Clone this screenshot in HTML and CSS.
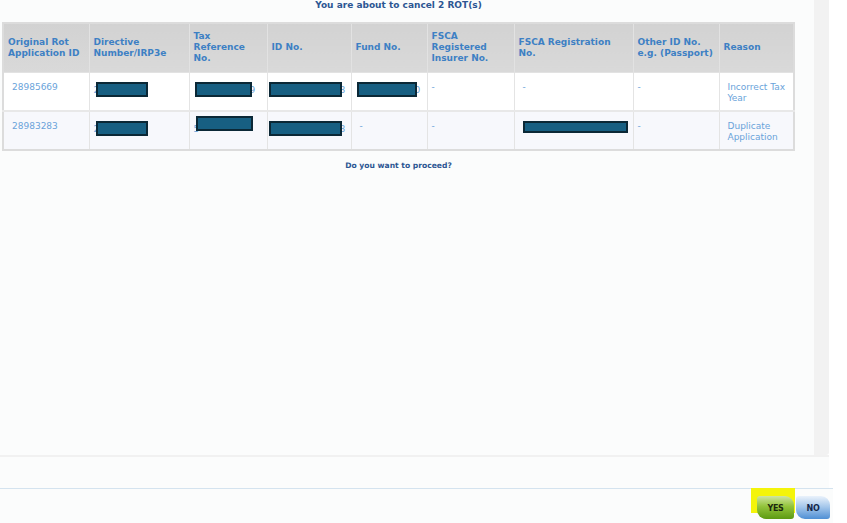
FILE: index.html
```html
<!DOCTYPE html>
<html lang="en">
<head>
  <meta charset="UTF-8">
  <meta name="viewport" content="width=device-width, initial-scale=1.0">
  <title>Cancel ROT</title>
  <link rel="stylesheet" href="styles.css">
</head>
<body>
  <div class="frame">
    <div class="panel">
      <div class="content">
        <h1 class="titulo">You are about to cancel 2 ROT(s)</h1>
        <table class="rot-table">
          <colgroup>
            <col style="width:86px"><col style="width:100px"><col style="width:78px">
            <col style="width:84px"><col style="width:76px"><col style="width:87px">
            <col style="width:119px"><col style="width:86px"><col style="width:75px">
          </colgroup>
          <thead>
            <tr>
              <th>Original Rot<br>Application ID</th>
              <th>Directive<br>Number/IRP3e</th>
              <th>Tax<br>Reference<br>No.</th>
              <th>ID No.</th>
              <th>Fund No.</th>
              <th>FSCA<br>Registered<br>Insurer No.</th>
              <th>FSCA Registration<br>No.</th>
              <th>Other ID No.<br>e.g. (Passport)</th>
              <th>Reason</th>
            </tr>
          </thead>
          <tbody>
            <tr>
              <td>28985669</td>
              <td class="tight"><span class="oculto">2<span class="tarja w51"></span></span></td>
              <td><span class="oculto"><span class="tarja w56"></span>9</span></td>
              <td class="tight"><span class="oculto"><span class="tarja w72"></span>8</span></td>
              <td><span class="oculto"><span class="tarja w59"></span>0</span></td>
              <td class="tight">-</td>
              <td>-</td>
              <td class="tight">-</td>
              <td>Incorrect Tax<br>Year</td>
            </tr>
            <tr>
              <td>28983283</td>
              <td class="tight"><span class="oculto">2<span class="tarja w51"></span></span></td>
              <td class="tight"><span class="oculto sobe">5<span class="tarja w56"></span></span></td>
              <td class="tight"><span class="oculto"><span class="tarja w72"></span>8</span></td>
              <td>-</td>
              <td class="tight">-</td>
              <td><span class="oculto"><span class="tarja w104 fina"></span></span></td>
              <td class="tight">-</td>
              <td>Duplicate<br>Application</td>
            </tr>
          </tbody>
        </table>
        <p class="pergunta">Do you want to proceed?</p>
      </div>
    </div>
    <div class="scroll"></div>
  </div>
  <div class="faixa"></div>
  <div class="acoes">
    <span class="marca"><button class="btn btn-sim">YES</button></span>
    <button class="btn btn-nao">NO</button>
  </div>
</body>
</html>
```

FILE: styles.css
```css
:root {
  --azul-titulo: #2c5693;
  --azul-cabecalho: #3d80c4;
  --azul-texto: #6aa3da;
  --fundo: #fbfcfc;
  --cinza-borda: #dcdcdc;
  --tarja: #175f82;
}
* { box-sizing: border-box; margin: 0; padding: 0; }
body {
  font-family: 'DejaVu Sans', Verdana, sans-serif;
  background: #fff;
  width: 847px;
  height: 523px;
  overflow: hidden;
}
.frame {
  display: flex;
  width: 829px;
  height: 455px;
}
.panel {
  width: 814px;
  background: var(--fundo);
}
.scroll {
  width: 15px;
  background: #f2f2f2;
  border-radius: 0 0 3px 0;
}
.content {
  width: 793px;
  margin-left: 2px;
}
.titulo {
  margin-top: 0;
  font-size: 9px;
  line-height: 11px;
  font-weight: bold;
  color: var(--azul-titulo);
  text-align: center;
}
.rot-table {
  margin-top: 11px;
  width: 793px;
  table-layout: fixed;
  border-collapse: collapse;
  border: 2px solid var(--cinza-borda);
  font-size: 9px;
}
.rot-table th {
  height: 49px;
  padding: 0 3px 0 4px;
  text-align: left;
  vertical-align: middle;
  font-weight: bold;
  line-height: 11px;
  color: var(--azul-cabecalho);
  background: linear-gradient(#d2d2d2, #d9d9d9);
  border: 1px solid #e2e2e2;
  border-top: none;
}
.rot-table td {
  height: 39px;
  padding: 9px 4px 0 8px;
  vertical-align: top;
  line-height: 11px;
  color: var(--azul-texto);
  background: #fff;
  border: 1px solid #e4e4e4;
  white-space: nowrap;
}
.rot-table tbody tr + tr td {
  background: #f7f8fc;
  border-top: 2px solid #e8e8e8;
}
.rot-table td.tight { padding-left: 4px; }
.oculto {
  position: relative;
  display: inline-block;
  white-space: nowrap;
}
.tarja {
  display: inline-block;
  height: 15px;
  vertical-align: -4px;
  margin: 0 -2px 0 -3px;
  background: var(--tarja);
  border: 2px solid #0b2836;
  position: relative;
}
/* esta tarja ficou um pouco acima das outras */
.sobe .tarja { top: -5px; }
.tarja.fina { height: 12px; margin-left: 0; vertical-align: -2px; }
.w51 { width: 52px; }
.w56 { width: 57px; }
.w72 { width: 73px; }
.w59 { width: 60px; }
.w104 { width: 105px; }
.pergunta {
  margin-top: 10px;
  font-size: 7.6px;
  line-height: 10px;
  font-weight: bold;
  color: var(--azul-titulo);
  text-align: center;
}
.faixa {
  width: 829px;
  height: 33px;
  background: var(--fundo);
  border-top: 2px solid #f1f1f1;
}
.acoes {
  width: 833px;
  height: 35px;
  background: var(--fundo);
  border-top: 1px solid #d4e3ef;
  display: flex;
  justify-content: flex-end;
  align-items: flex-start;
  gap: 2px;
  padding: 7px 3px 0 0;
}
.marca { position: relative; }
.marca::before {
  content: '';
  position: absolute;
  left: -6px;
  top: -8px;
  width: 44px;
  height: 25px;
  background: #f4f40a;
}
.btn {
  position: relative;
  width: 37px;
  height: 23px;
  border: none;
  border-radius: 3px 9px 3px 9px;
  font-family: 'DejaVu Sans', Verdana, sans-serif;
  font-size: 8px;
  font-weight: bold;
  letter-spacing: -0.3px;
  padding-top: 2px;
  cursor: pointer;
}
.btn-sim {
  color: #1d2a0e;
  background: linear-gradient(#cfe5a0 0%, #93c43c 45%, #5c9a12 100%);
}
.btn-nao {
  width: 34px;
  color: #14284a;
  background: linear-gradient(#eaf2fb 0%, #a8c9ec 45%, #4f8fd4 100%);
}
```
